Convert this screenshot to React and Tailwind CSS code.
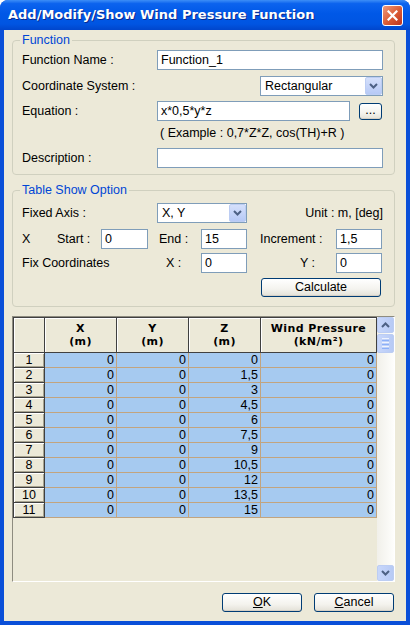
import React from 'react';

const Chevron = ({ className = '' }) => (
  <svg width="9" height="6" viewBox="0 0 9 6" className={className}>
    <path d="M1 1 L4.5 4.5 L8 1" fill="none" stroke="#4D6185" strokeWidth="2" />
  </svg>
);

const ChevronUp = () => (
  <svg width="9" height="6" viewBox="0 0 9 6">
    <path d="M1 5 L4.5 1.5 L8 5" fill="none" stroke="#4D6185" strokeWidth="2" />
  </svg>
);

function Input({ value = '', className = '' }) {
  return (
    <div className={`h-[20px] border border-[#7F9DB9] bg-white pl-[3px] flex items-center text-black whitespace-nowrap ${className}`}>
      {value}
    </div>
  );
}

function Select({ value, className = '' }) {
  return (
    <div className={`h-[20px] border border-[#7F9DB9] bg-white flex items-center ${className}`}>
      <span className="flex-1 pl-[4px]">{value}</span>
      <div className="w-[17px] h-[18px] rounded-[2px] border border-[#BCCDF3] bg-[linear-gradient(to_bottom,#D5E0FB,#B6C9F6)] flex items-center justify-center">
        <Chevron />
      </div>
    </div>
  );
}

function XpButton({ children, className = '' }) {
  return (
    <div className={`rounded-[3px] border border-[#003C74] bg-[linear-gradient(to_bottom,#FFFFFF,#F4F3EE_60%,#E3E1D7)] shadow-[inset_0_-1px_0_#D6D0C5] flex items-center justify-center text-black ${className}`}>
      {children}
    </div>
  );
}

const rows = [
  ['0', '0', '0', '0'],
  ['0', '0', '1,5', '0'],
  ['0', '0', '3', '0'],
  ['0', '0', '4,5', '0'],
  ['0', '0', '6', '0'],
  ['0', '0', '7,5', '0'],
  ['0', '0', '9', '0'],
  ['0', '0', '10,5', '0'],
  ['0', '0', '12', '0'],
  ['0', '0', '13,5', '0'],
  ['0', '0', '15', '0'],
];

const headers = [
  ['X', '(m)'],
  ['Y', '(m)'],
  ['Z', '(m)'],
  ['Wind Pressure', '(kN/m²)'],
];

function Grid() {
  return (
    <div className="w-[364px] border-l border-t border-[#404040] flex flex-col">
      <div className="grid grid-cols-[31px_72px_72px_72px_116px] h-[35px]">
        <div className="bg-[#ECE9D8] border-r border-b border-[#404040] shadow-[inset_1px_1px_0_#fff]" />
        {headers.map((h, i) => (
          <div
            key={i}
            className="bg-[#ECE9D8] border-r border-b border-[#404040] shadow-[inset_1px_1px_0_#fff] flex flex-col items-center justify-center font-['DejaVu_Sans',sans-serif] font-bold text-[11px] leading-[13px] tracking-[0.4px] text-black"
          >
            <span>{h[0]}</span>
            <span>{h[1]}</span>
          </div>
        ))}
      </div>
      {rows.map((r, i) => (
        <div key={i} className="grid grid-cols-[31px_72px_72px_72px_116px] h-[15px]">
          <div className="bg-[#ECE9D8] border-r border-b border-[#404040] shadow-[inset_1px_1px_0_#fff,inset_-1px_-1px_0_#A7A38F] flex items-center justify-center leading-[14px]">
            {i + 1}
          </div>
          {r.map((v, j) => (
            <div key={j} className="bg-[#A6CAF0] border-r border-b border-[#C2A47F] flex items-center justify-end pr-[2px] leading-[14px]">
              {v}
            </div>
          ))}
        </div>
      ))}
    </div>
  );
}

function Scrollbar() {
  return (
    <div className="w-[17px] flex flex-col bg-[linear-gradient(to_right,#F1F0EA,#FEFEFC)]">
      <div className="h-[16px] rounded-[2px] border border-[#BCCDF3] bg-[linear-gradient(to_right,#C8D7FB,#B7CAF5)] flex items-center justify-center">
        <ChevronUp />
      </div>
      <div className="h-[19px] mt-[1px] rounded-[2px] border border-[#BCCDF3] bg-[linear-gradient(to_right,#C8D7FB,#B7CAF5)] flex flex-col items-center justify-center gap-[1px]">
        <div className="w-[7px] h-[1px] bg-[#EEF3FE]" />
        <div className="w-[7px] h-[1px] bg-[#8CB0F8]" />
        <div className="w-[7px] h-[1px] bg-[#EEF3FE]" />
        <div className="w-[7px] h-[1px] bg-[#8CB0F8]" />
        <div className="w-[7px] h-[1px] bg-[#EEF3FE]" />
        <div className="w-[7px] h-[1px] bg-[#8CB0F8]" />
      </div>
      <div className="flex-1" />
      <div className="h-[16px] rounded-[2px] border border-[#BCCDF3] bg-[linear-gradient(to_right,#C8D7FB,#B7CAF5)] flex items-center justify-center">
        <Chevron />
      </div>
    </div>
  );
}

export default function App() {
  return (
    <div className="w-[410px] h-[625px] flex flex-col bg-[#0A4FD8] rounded-t-[8px] overflow-hidden font-['Liberation_Sans',Arial,sans-serif] text-[12.5px] text-black">
      {/* title bar */}
      <div className="h-[30px] shrink-0 flex items-center pl-[8px] pr-[7px] bg-[linear-gradient(to_bottom,#3D8EF7_0%,#0C63EE_12%,#0058E7_45%,#0055E2_80%,#0046CC_100%)]">
        <span className="flex-1 text-white font-['DejaVu_Sans',sans-serif] font-bold text-[13px] [text-shadow:1px_1px_0_#0A2A8E]">
          Add/Modify/Show Wind Pressure Function
        </span>
        <div className="w-[21px] h-[21px] rounded-[3px] border border-white bg-[linear-gradient(135deg,#EE9A7C,#DA5A33_55%,#BC3320)] flex items-center justify-center">
          <svg width="11" height="11" viewBox="0 0 11 11">
            <path d="M1.5 1.5 L9.5 9.5 M9.5 1.5 L1.5 9.5" stroke="#fff" strokeWidth="2.2" strokeLinecap="square" />
          </svg>
        </div>
      </div>

      {/* body */}
      <div className="flex-1 mx-[4px] mb-[4px] bg-[#ECE9D8] flex flex-col pl-[8px] pr-[11px]">
        <fieldset className="mt-[3px] border border-[#D0D0BF] rounded-[4px] pl-[9px] pr-[11px] pb-[6px]">
          <legend className="text-[#0046D5] px-[2px] -ml-[2px] leading-[15px]">Function</legend>
          <div className="flex items-center h-[20px] mt-[2px]">
            <span className="w-[135px]">Function Name :</span>
            <Input value="Function_1" className="flex-1" />
          </div>
          <div className="flex items-center h-[20px] mt-[6px]">
            <span>Coordinate System :</span>
            <Select value="Rectangular" className="ml-auto w-[123px]" />
          </div>
          <div className="flex items-center h-[20px] mt-[5px]">
            <span className="w-[135px]">Equation :</span>
            <Input value="x*0,5*y*z" className="w-[193px]" />
            <XpButton className="ml-[9px] w-[23px] h-[17px] leading-none pb-[2px]">...</XpButton>
          </div>
          <div className="flex items-center h-[18px] mt-[3px] pl-[138px]">
            ( Example : 0,7*Z*Z, cos(TH)+R )
          </div>
          <div className="flex items-center h-[20px] mt-[6px]">
            <span className="w-[135px]">Description :</span>
            <Input className="flex-1" />
          </div>
        </fieldset>

        <fieldset className="mt-[8px] border border-[#D0D0BF] rounded-[4px] pl-[9px] pr-[11px] pb-[9px]">
          <legend className="text-[#0046D5] px-[2px] -ml-[2px] leading-[15px]">Table Show Option</legend>
          <div className="flex items-center h-[20px] mt-[5px]">
            <span className="w-[135px]">Fixed Axis :</span>
            <Select value="X, Y" className="w-[90px]" />
            <span className="ml-auto">Unit : m, [deg]</span>
          </div>
          <div className="flex items-center h-[20px] mt-[6px]">
            <span className="w-[35px]">X</span>
            <span className="w-[44px]">Start :</span>
            <Input value="0" className="w-[47px]" />
            <span className="ml-[11px] w-[42px]">End :</span>
            <Input value="15" className="w-[46px]" />
            <span className="ml-[13px] w-[76px]">Increment :</span>
            <Input value="1,5" className="w-[46px]" />
          </div>
          <div className="flex items-center h-[20px] mt-[4px]">
            <span className="w-[144px]">Fix Coordinates</span>
            <span className="w-[35px]">X :</span>
            <Input value="0" className="w-[46px]" />
            <span className="ml-[53px] w-[36px]">Y :</span>
            <Input value="0" className="w-[46px]" />
          </div>
          <div className="flex mt-[5px]">
            <XpButton className="ml-[239px] w-[120px] h-[19px]">Calculate</XpButton>
          </div>
        </fieldset>

        {/* grid frame */}
        <div className="mt-[9px] h-[266px] flex border border-t-[#8E8C80] border-l-[#8E8C80] border-b-white border-r-white">
          <div className="bg-[#ECE9D8]">
            <Grid />
          </div>
          <Scrollbar />
        </div>

        <div className="flex justify-end gap-[12px] mt-[11px] mr-[1px]">
          <XpButton className="w-[80px] h-[19px]"><span><span className="underline">O</span>K</span></XpButton>
          <XpButton className="w-[80px] h-[19px]"><span><span className="underline">C</span>ancel</span></XpButton>
        </div>
      </div>
    </div>
  );
}
